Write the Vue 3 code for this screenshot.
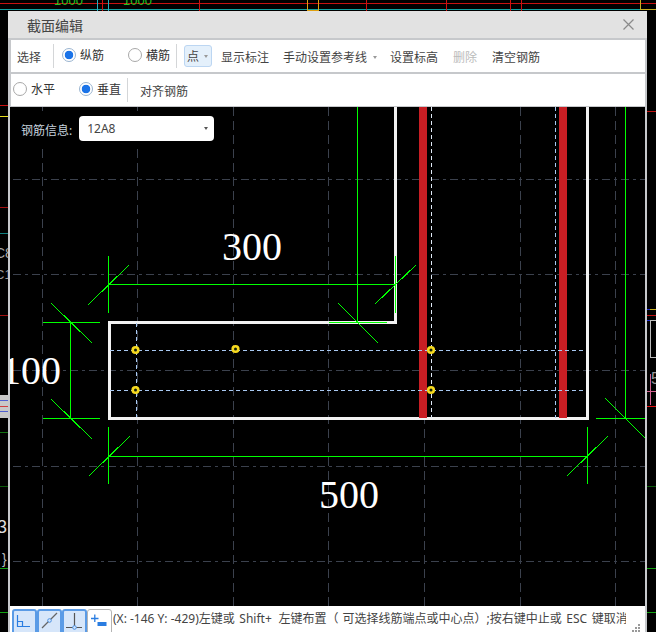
<template>
  <div class="desktop">
    <!-- cad drawing behind the dialog -->
    <svg class="backdrop" width="656" height="632" shape-rendering="crispEdges">
      <line v-for="(l, i) in backdropLines" :key="i" :x1="l[0]" :y1="l[1]" :x2="l[2]" :y2="l[3]" :stroke="l[4]" />
      <rect x="307.5" y="-2" width="11" height="12" fill="none" stroke="#e0a010" />
      <rect x="640.5" y="-3" width="20" height="12" fill="none" stroke="#c8b020" />
      <rect x="650.5" y="320.5" width="12" height="37" fill="none" stroke="#bbb" />
      <rect x="0" y="395" width="8" height="23" fill="#c8c8c8" />
      <line x1="0" y1="400.5" x2="8" y2="400.5" stroke="#5060d0" />
      <line x1="0" y1="406.5" x2="8" y2="406.5" stroke="#d04040" />
      <line x1="0" y1="411.5" x2="8" y2="411.5" stroke="#5060d0" />
      <g class="back-text">
        <text x="54" y="5" fill="#20c020" font-size="13">1000</text>
        <text x="123" y="5" fill="#20c020" font-size="13">1000</text>
        <text x="-5" y="258" fill="#aaa" font-size="14">C8</text>
        <text x="-5" y="279" fill="#999" font-size="13">C1</text>
        <text x="-3" y="533" fill="#ddd" font-size="18">3</text>
        <text x="2" y="564" fill="#bbb" font-size="14">}</text>
        <text x="651" y="384" fill="#999" font-size="16">5</text>
      </g>
    </svg>

    <div class="dialog">
      <div class="title">
        <span>截面编辑</span>
        <svg class="close" width="11" height="11" viewBox="0 0 11 11">
          <path d="M.5.5l10 10M10.5.5l-10 10" stroke="#8a8a8a" stroke-width="1.2" fill="none" />
        </svg>
      </div>

      <div class="bar first">
        <span class="tool pick">选择</span>
        <i class="sep"></i>
        <label class="radio lead"><i class="dot on"></i>纵筋</label>
        <label class="radio second"><i class="dot"></i>横筋</label>
        <i class="sep sep-b"></i>
        <span class="drop"><span>点</span><i class="caret"></i></span>
        <span class="tool show">显示标注</span>
        <span class="tool manual">手动设置参考线<i class="caret"></i></span>
        <span class="tool level">设置标高</span>
        <span class="tool del">删除</span>
        <span class="tool clear">清空钢筋</span>
      </div>

      <div class="bar">
        <label class="radio flat"><i class="dot"></i>水平</label>
        <label class="radio upright"><i class="dot on"></i>垂直</label>
        <i class="sep sep-c"></i>
        <span class="tool align">对齐钢筋</span>
      </div>

      <div class="canvas">
        <svg class="drawing" width="635" height="499" viewBox="10 107 635 499">
          <g shape-rendering="crispEdges">
            <line v-for="x in gridX" :key="'x' + x" :x1="x" y1="107" :x2="x" y2="606" class="grid" />
            <line v-for="y in gridY" :key="'y' + y" x1="13" :y1="y" x2="645" :y2="y" class="grid across" />
            <path d="M395.5 107V322.5H109V418.5H587.5V107" class="wall" />
            <rect x="419" y="107" width="8" height="311" fill="#c81e24" />
            <rect x="559" y="107" width="8" height="311" fill="#c81e24" />
            <line x1="110" y1="350.5" x2="586" y2="350.5" class="rebar" />
            <line x1="110" y1="390.5" x2="586" y2="390.5" class="rebar" />
            <line x1="136.5" y1="323" x2="136.5" y2="417" class="rebar" />
            <line x1="431.5" y1="107" x2="431.5" y2="418" class="rebar pale" />
            <line x1="555.5" y1="107" x2="555.5" y2="418" class="rebar" />
            <line v-for="(l, i) in dimLines" :key="i" :x1="l[0]" :y1="l[1]" :x2="l[2]" :y2="l[3]" class="dim" />
          </g>
          <circle v-for="(p, i) in points" :key="i" :cx="p[0]" :cy="p[1]" r="2.8" class="point" />
          <text x="222" y="260" class="size">300</text>
          <text x="1" y="384" class="size">100</text>
          <text x="319" y="508" class="size">500</text>
        </svg>
        <div class="info">
          <span class="info-label">钢筋信息:</span>
          <div class="select"><span>12A8</span><i class="caret dark"></i></div>
        </div>
      </div>

      <div class="status">
        <div class="modes">
          <div class="mode active">
            <svg width="24" height="23" viewBox="0 0 24 23"><path d="M4.5 6V17.5H17M4.5 12.5H9.5V17.5" fill="none" stroke="#2a7de1" stroke-width="1.2" /></svg>
          </div>
          <div class="mode active">
            <svg width="24" height="23" viewBox="0 0 24 23"><path d="M4 19L19 4" stroke="#666" stroke-width="1.2" /><circle cx="11.5" cy="11.5" r="1.8" fill="#d6e6fa" stroke="#4a90e2" /></svg>
          </div>
          <div class="mode active">
            <svg width="24" height="23" viewBox="0 0 24 23"><path d="M3 18.5H19M11.5 4V18" fill="none" stroke="#555" stroke-width="1.2" /><circle cx="11.5" cy="18.5" r="1.8" fill="#d6e6fa" stroke="#4a90e2" /></svg>
          </div>
          <div class="mode">
            <svg width="24" height="23" viewBox="0 0 24 23"><path d="M3 9.5H10.5M6.8 5.5V13" stroke="#2a7de1" stroke-width="1.3" fill="none" /><rect x="9.5" y="13" width="9" height="4" fill="#2a7de1" /></svg>
          </div>
        </div>
        <div class="hint"><span class="coords">(X: -146 Y: -429)</span>左键或 <span class="shift">Shift+</span> 左键布置<span class="paren open">（</span>可选择线筋端点或中心点<span class="paren">）</span>;按右键中止或 ESC 键取消</div>
        <svg class="grip" width="9" height="8" viewBox="0 0 9 8">
          <rect v-for="(g, i) in gripDots" :key="i" :x="g[0]" :y="g[1]" width="2" height="2" fill="#999" />
        </svg>
      </div>
    </div>
  </div>
</template>

<script setup>
const gridX = [42.5, 137.5, 233.5, 328.5, 424.5, 520.5, 615.5]
const gridY = [179.5, 274.5, 370.5, 466.5, 561.5]

const dimLines = [
  // 300
  [108, 284.5, 396, 284.5],
  [108.5, 256, 108.5, 313],
  [88, 305, 129, 265],
  [395.5, 256, 395.5, 313],
  [375, 304, 416, 265],
  [357.5, 107, 357.5, 322],
  [329, 322.5, 387, 322.5],
  [338, 303, 378, 343],
  // 100
  [70.5, 322, 70.5, 418],
  [43, 322.5, 100, 322.5],
  [43, 418.5, 100, 418.5],
  [51, 303, 92, 343],
  [51, 399, 92, 439],
  // 500
  [108, 456.5, 587, 456.5],
  [108.5, 427, 108.5, 484],
  [89, 476, 130, 436],
  [587.5, 427, 587.5, 484],
  [567, 476, 608, 436],
  // right side
  [625.5, 107, 625.5, 418],
  [596, 418.5, 645, 418.5],
  [605, 398, 646, 439],
]

const points = [[135.5, 350], [235.5, 349], [431, 350], [431, 390], [135.5, 390]]

const backdropLines = [
  [0, 3.5, 656, 3.5, '#c81010'],
  [0, 9.5, 656, 9.5, '#10a0a0'],
  [97.5, 0, 97.5, 11, '#20b0c0'],
  [102.5, 0, 102.5, 11, '#d01010'],
  [108.5, 0, 108.5, 11, '#20b0c0'],
  [199.5, 0, 199.5, 11, '#d01010'],
  [366.5, 0, 366.5, 11, '#d01010'],
  [446.5, 0, 446.5, 11, '#d01010'],
  [510.5, 0, 510.5, 11, '#d01010'],
  [521.5, 0, 521.5, 11, '#d01010'],
  [0, 105.5, 8, 105.5, '#c81010'],
  [0, 116.5, 8, 116.5, '#e8e020'],
  [0, 207.5, 8, 207.5, '#a01010'],
  [0, 233.5, 8, 233.5, '#108080'],
  [0, 315.5, 8, 315.5, '#a01010'],
  [0, 432.5, 8, 432.5, '#107010'],
  [0, 486.5, 8, 486.5, '#0a5a0a'],
  [0, 568.5, 8, 568.5, '#10a010'],
  [0, 612.5, 8, 612.5, '#10a010'],
  [647, 111.5, 656, 111.5, '#c01010'],
  [647, 309.5, 650, 309.5, '#2030d0'],
  [650, 309.5, 656, 309.5, '#c8b020'],
  [647, 315.5, 656, 315.5, '#c01010'],
  [647, 320.5, 650, 320.5, '#2030d0'],
  [650.5, 374, 650.5, 405, '#d06090'],
  [647, 391.5, 656, 391.5, '#d06090'],
  [647, 406.5, 656, 406.5, '#e01010'],
  [647, 486.5, 656, 486.5, '#0a5a0a'],
  [647, 568.5, 656, 568.5, '#10a010'],
  [647, 612.5, 656, 612.5, '#10a010'],
]

const gripDots = [[6, 0], [3, 3], [6, 3], [0, 6], [3, 6], [6, 6]]
</script>

<style>
html, body { background: #000; overflow: hidden; }
</style>

<style scoped>
.desktop {
  position: relative;
  width: 656px;
  height: 632px;
  overflow: hidden;
  background: #000;
  font-family: "Noto Sans", "Noto Sans CJK SC", sans-serif;
}

.backdrop {
  position: absolute;
  left: 0;
  top: 0;
}

.back-text {
  font-family: "Liberation Sans", sans-serif;
}

.dialog {
  position: absolute;
  left: 8px;
  top: 11px;
  width: 639px;
  height: 621px;
  display: flex;
  flex-direction: column;
  background: #c6c8cb;
  font-size: 12px;
  color: #444;
}

.title {
  flex: none;
  height: 27px;
  margin-bottom: 2px;
  display: flex;
  align-items: center;
  justify-content: space-between;
  padding: 0 13px 0 19px;
  background: #e2e2e2;
  font-size: 14px;
  color: #444;
}

.bar {
  flex: none;
  height: 32px;
  margin: 0 2px 2px 3px;
  display: flex;
  align-items: center;
  background: #fff;
  white-space: nowrap;
}

.tool {
  display: flex;
  align-items: center;
  position: relative;
  top: 1px;
}

.pick { margin-left: 6px; }
.show { margin-left: 9px; }
.manual { margin-left: 14px; }
.level { margin-left: 13px; }
.del { margin-left: 15px; color: #bbb; }
.clear { margin-left: 15px; }
.align { margin-left: 12px; }

.sep {
  width: 1px;
  height: 24px;
  margin-left: 12px;
  background: #d4d6d8;
}

.sep-b { margin-left: 6px; }
.sep-c { margin-left: 6px; }

.radio {
  display: flex;
  align-items: center;
  gap: 4px;
  color: #333;
  position: relative;
  top: -1px;
}

.lead { margin-left: 8px; }
.second { margin-left: 24px; }
.flat { margin-left: 2px; }
.upright { margin-left: 24px; }

.dot {
  box-sizing: border-box;
  width: 14px;
  height: 14px;
  border: 1px solid #a8a8a8;
  border-radius: 50%;
  background: #fff;
}

.dot.on {
  border-color: #9ab4d0;
  background: radial-gradient(circle, #1a73e8 0 4px, #fff 4.6px);
}

.drop {
  box-sizing: border-box;
  width: 28px;
  height: 22px;
  margin-left: 7px;
  padding-left: 2px;
  display: flex;
  align-items: center;
  gap: 5px;
  border: 1px solid #bcd6f2;
  border-radius: 3px;
  background: #e4f0fb;
}

.caret {
  width: 0;
  height: 0;
  border: 2.5px solid transparent;
  border-top: 3px solid #999;
  border-bottom: 0;
}

.manual .caret {
  margin-left: 6px;
}

.caret.dark {
  border-top-color: #555;
}

.canvas {
  position: relative;
  flex: 1;
  min-height: 0;
  margin: -1px 2px 0;
  background: #000;
}

.drawing {
  display: block;
}

.grid {
  stroke: #3b414d;
  stroke-dasharray: 9 5;
}

.grid.across {
  stroke-dasharray: 8 4 3 4;
}

.wall {
  fill: none;
  stroke: #f2f2f2;
  stroke-width: 3;
}

.rebar {
  stroke: #a9c9f2;
  stroke-dasharray: 4 3;
}

.rebar.pale {
  stroke: #dfe9f6;
}

.dim {
  stroke: #00ff00;
}

.point {
  fill: #10200c;
  stroke: #f6d91e;
  stroke-width: 2.6;
}

.size {
  font-family: "Liberation Serif", serif;
  font-size: 40px;
  fill: #fff;
}

.info {
  position: absolute;
  left: 0;
  top: 4px;
  width: 205px;
  height: 35px;
  display: flex;
  align-items: center;
  padding-left: 12px;
  box-sizing: border-box;
  background: #000;
}

.info-label {
  color: #c6d2de;
  position: relative;
  left: -1px;
  top: 1px;
}

.select {
  width: 135px;
  height: 25px;
  margin-left: 6px;
  padding: 0 6px 0 8px;
  box-sizing: border-box;
  display: flex;
  align-items: center;
  justify-content: space-between;
  background: #fff;
  border-radius: 4px;
  color: #444;
}

.status {
  position: relative;
  flex: none;
  height: 26px;
  margin: 0 2px;
  padding: 3px 0 0 2px;
  box-sizing: border-box;
  display: flex;
  background: #fff;
  overflow: hidden;
}

.modes {
  flex: none;
  display: flex;
}

.mode {
  box-sizing: border-box;
  width: 25px;
  height: 28px;
  border: 1px solid #b4b4b4;
  border-radius: 3px;
  background: #fff;
}

.mode.active {
  border: 2px solid #5a9be6;
  background: #d6e6fa;
}

.mode svg {
  display: block;
  margin: -1px 0 0;
}

.mode.active svg {
  margin: -2px 0 0 -1px;
}

.hint {
  width: 513px;
  margin-left: 1px;
  height: 20px;
  line-height: 20px;
  overflow: hidden;
  white-space: nowrap;
  color: #444;
  word-spacing: 1.5px;
}

.coords {
  word-spacing: 0;
}

.shift {
  padding-right: 2px;
}

.paren {
  display: inline-block;
  width: 12px;
}

.paren.open {
  width: 16px;
}

.close {
  display: block;
}

.grip {
  position: absolute;
  right: 4px;
  bottom: 0;
}
</style>
